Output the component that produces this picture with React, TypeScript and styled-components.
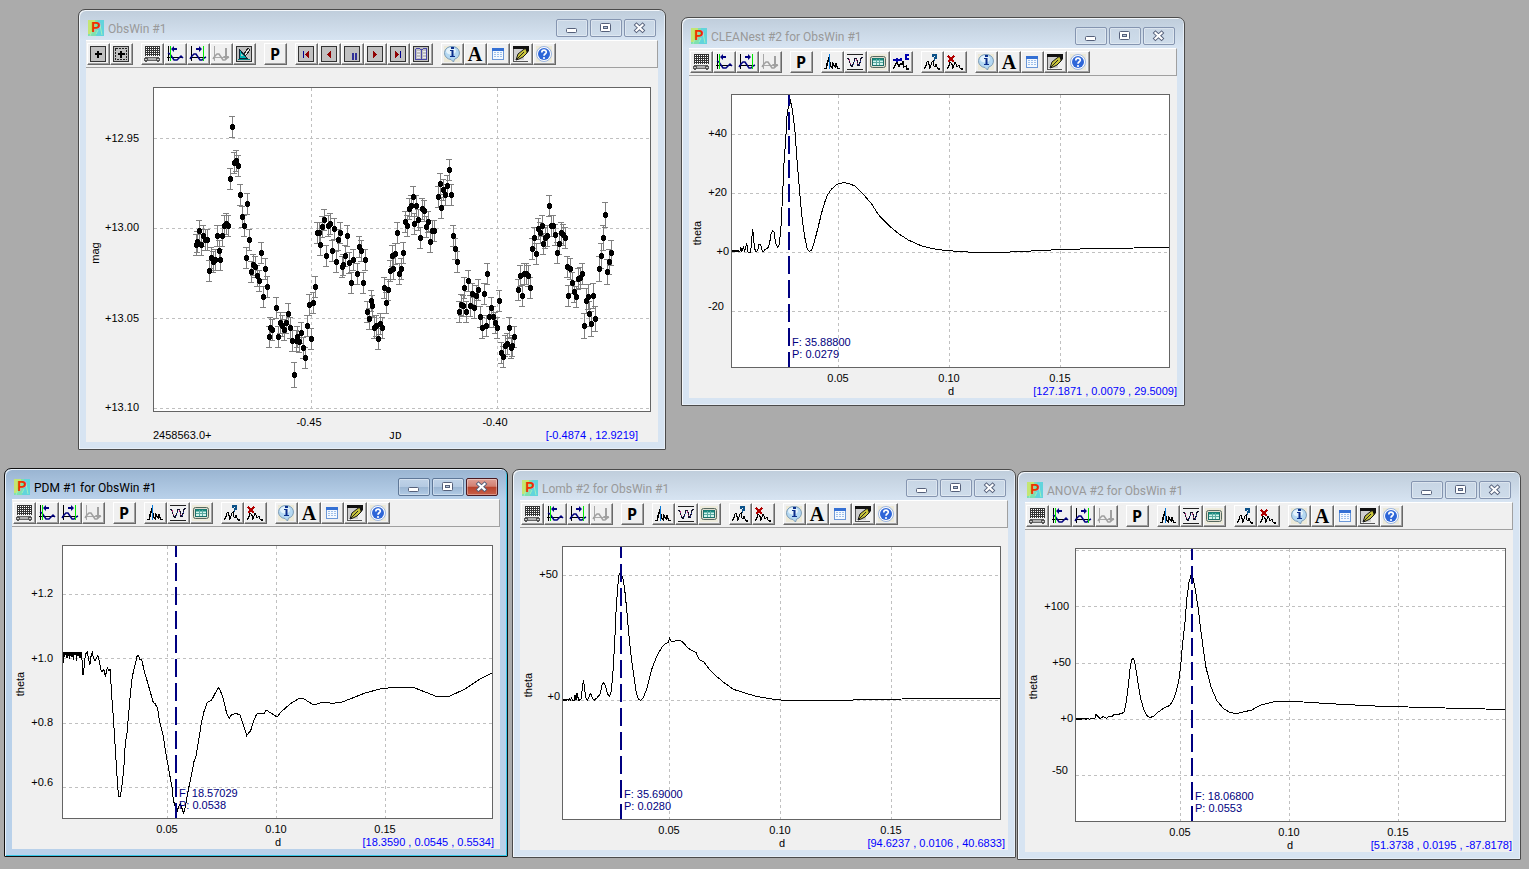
import React from "react";
import styled, { createGlobalStyle, css } from "styled-components";

const GlobalStyle = createGlobalStyle`
  html, body { margin: 0; background: #ababab; }
  *, *::before, *::after { box-sizing: border-box; }
`;

/* ---------- window chrome ---------- */

const Desktop = styled.main`
  position: relative;
  min-height: 100vh;
  overflow: hidden;
  background: #ababab;
  font-family: "Liberation Sans", Arial, sans-serif;
  font-size: 11px;
`;

const Frame = styled.section<{ $x: number; $y: number; $w: number; $h: number; $active?: boolean }>`
  position: absolute;
  left: ${(p) => p.$x}px;
  top: ${(p) => p.$y}px;
  width: ${(p) => p.$w}px;
  height: ${(p) => p.$h}px;
  display: flex;
  flex-direction: column;
  padding: 0 7px 7px;
  border: 1px solid ${(p) => (p.$active ? "#111" : "#4b4b4b")};
  border-radius: 7px 7px 1px 1px;
  ${(p) =>
    p.$active
      ? css`
          background: linear-gradient(#99b4d1 0, #b9d1ea 30px, #b9d1ea 100%);
          box-shadow: inset 1px 1px 0 #e8f1fa, inset -1px -1px 0 #37c8e8;
        `
      : css`
          background: linear-gradient(#bfcddb 0, #d7e4f2 30px, #d7e4f2 100%);
          box-shadow: inset 1px 1px 0 #f3f7fb, inset -1px -1px 0 #e6eef7;
        `}
`;

const TitleBar = styled.header`
  flex: none;
  display: flex;
  align-items: flex-start;
  height: 30px;
  padding: 9px 2px 0;
`;

const Title = styled.h1<{ $active?: boolean }>`
  flex: 1;
  margin: 0 0 0 4px;
  font: 400 12px/20px Roboto, "Open Sans", sans-serif;
  color: ${(p) => (p.$active ? "#000" : "#999")};
  white-space: nowrap;
`;

const AppIcon = styled.svg`
  flex: none;
  width: 16px;
  height: 16px;
  margin-top: 1px;
  overflow: visible;
`;

const Captions = styled.div`
  display: flex;
  gap: 2px;
`;

const Caption = styled.button<{ $tone: "idle" | "blue" | "red" }>`
  display: flex;
  align-items: center;
  justify-content: center;
  width: 32px;
  height: 18px;
  padding: 0;
  border: 1px solid ${(p) => ({ idle: "#8595b0", blue: "#5f7898", red: "#4a1a22" })[p.$tone]};
  border-radius: 2px;
  box-shadow: inset 0 0 0 1px rgba(255, 255, 255, 0.35);
  background: ${(p) =>
    ({
      idle: "linear-gradient(#c8d6e5, #cedcea)",
      blue: "linear-gradient(#c0d3e8 0, #b4cae2 48%, #9ab5d2 50%, #b2cbe5 100%)",
      red: "linear-gradient(#dfa096 0, #d28072 46%, #b8412b 50%, #c8614a 100%)",
    })[p.$tone]};
`;

const Body = styled.div`
  flex: 1;
  display: flex;
  flex-direction: column;
  min-height: 0;
  background: #f0f0f0;
`;

const Toolbar = styled.div`
  flex: none;
  display: flex;
  gap: 8px;
  height: 28px;
  padding: 2px 0 0 1px;
  border-top: 1px solid #fff;
  border-right: 1px solid #a0a0a0;
  border-bottom: 1px solid #a0a0a0;
`;

const Group = styled.div`
  display: flex;
`;

const Tool = styled.button`
  display: flex;
  align-items: flex-start;
  justify-content: flex-start;
  width: 23px;
  height: 22px;
  padding: 2px;
  border: 1px solid;
  border-color: #fff #696969 #696969 #fff;
  box-shadow: inset -1px -1px 0 #a0a0a0;
  background: #f0f0f0;
  svg {
    flex: none;
    display: block;
    width: 16px;
    height: 16px;
    overflow: visible;
  }
`;

const Glyph = styled.span<{ $serif?: boolean }>`
  flex: none;
  width: 16px;
  color: #000;
  text-align: center;
  font: ${(p) =>
    p.$serif
      ? `700 20px/16px "Liberation Serif", serif`
      : `700 16px/16px "Open Sans", "Liberation Sans", sans-serif`};
`;

const Plot = styled.svg`
  flex: 1;
  display: block;
  width: 100%;
  min-height: 0;
  font-family: "Liberation Sans", Arial, sans-serif;
  font-size: 11px;
  .unit {
    font-family: "Liberation Mono", monospace;
  }
`;

/* ---------- toolbar drawings, on a 16 x 16 grid ---------- */

const crisp = { shapeRendering: "crispEdges" as const };

const Box = ({ children }: { children: React.ReactNode }) => (
  <svg viewBox="0 0 16 16" {...crisp}>
    <rect width="16" height="16" fill="#333" />
    <rect x="1" y="1" width="14" height="14" fill="#c0c0c0" />
    {children}
  </svg>
);

const Plus = () => <path d="M5 7h7v2h-7zM7 5h2v7h-2z" fill="#000" />;

const Axes = ({ side }: { side: "left" | "right" | "off" }) => {
  const off = side === "off";
  const ink = off ? "#a8a8a8" : "#000";
  const wave = off ? "#a0a0a0" : "#000080";
  return (
    <svg viewBox="0 0 16 16">
      <rect x="1" y="0" width="1" height="15" fill={ink} />
      <rect x="0" y="11" width="16" height="1" fill={ink} />
      <path
        d={
          side === "left"
            ? "M1 7L3 8L5 11L7 14H10L12 12L14 10L16 12"
            : "M0 13L2 10L4 8H6L8 11L10 14H12L14 12L16 11"
        }
        fill="none"
        stroke={wave}
        strokeWidth="1.500"
      />
      {side === "left" && <path d="M4 3L7 0V2H10V4H7V6Z" fill={wave} />}
      {side === "right" && <path d="M12 3L9 0V2H6V4H9V6Z" fill={wave} />}
      {side === "left" && <rect x="3" y="0" width="1" height="15" fill="#00e800" />}
      {side === "right" && <rect x="13" y="0" width="1" height="15" fill="#00e800" />}
      {off && <path d="M12 2h2v8h2l-3 4l-3-4h2z" fill="#a0a0a0" />}
    </svg>
  );
};

const peaks = "M0 14.500H2L3 12V10L4 7L5 4L6 9L7 13L8 14L9 9L10 12L11 13L12 10L13 13L14 14.500H16";

const icons: Record<string, React.ReactNode> = {
  add: (
    <Box>
      <Plus />
    </Box>
  ),
  addArea: (
    <Box>
      <rect x="2.500" y="2.500" width="11" height="11" fill="none" stroke="#222" strokeDasharray="2 1" />
      <Plus />
    </Box>
  ),
  grid: (
    <svg viewBox="0 0 16 16" {...crisp}>
      <rect x="1" y="0" width="15" height="10" fill="#fff" />
      <path
        d="M1.500 0v10M3.500 0v10M5.500 0v10M7.500 0v10M9.500 0v10M11.500 0v10M13.500 0v10M15.500 0v10M1 .5h15M1 2.500h15M1 4.500h15M1 6.500h15M1 8.500h15"
        stroke="#333"
        fill="none"
      />
      <path d="M1 12h14v2h-14z" fill="#b0b0b0" />
      <path d="M3 11h11v1h-11zM4 14h8v1h-8z" fill="#666" />
      <path d="M0 12h4v3h-4zM12 12h4v3h-4zM1 11h2v5h-2zM13 11h2v5h-2z" fill="#555" />
      <path d="M1 13h2v1h-2zM13 13h2v1h-2z" fill="#ccc" />
    </svg>
  ),
  left: <Axes side="left" />,
  right: <Axes side="right" />,
  axesOff: <Axes side="off" />,
  design: (
    <Box>
      <path d="M3 3V12H11Z" fill="#00b4b4" stroke="#123" />
      <path d="M5 8V10H7Z" fill="#c0c0c0" />
      <path d="M8 8L12 2L14 4L10 9L8 10Z" fill="#e8e8e8" stroke="#222" />
      <path d="M2 13h12v1h-12z" fill="#008080" />
    </Box>
  ),
  first: (
    <Box>
      <path d="M5 5h1v7h-1z" fill="#000090" />
      <path d="M11 5V12L7 8.500Z" fill="#900000" />
    </Box>
  ),
  back: (
    <Box>
      <path d="M10 5V12L6 8.500Z" fill="#900000" />
    </Box>
  ),
  pause: (
    <Box>
      <path d="M8 7h2v7h-2zM11 7h2v7h-2z" fill="#303098" />
    </Box>
  ),
  forward: (
    <Box>
      <path d="M6 5V12L10 8.500Z" fill="#900000" />
    </Box>
  ),
  last: (
    <Box>
      <path d="M5 5V12L9 8.500Z" fill="#900000" />
      <path d="M10 5h1v7h-1z" fill="#000090" />
    </Box>
  ),
  book: (
    <Box>
      <path
        d="M2.500 3V13.500H13.500V3M8.500 3V14M2.500 2.500H6L8.500 4L11 2.500H13.500"
        fill="none"
        stroke="#4848a8"
      />
      <path d="M4 5.500h3M4 8.500h3M4 11.500h3M10 5.500h3M10 8.500h3M10 11.500h3" stroke="#e8e8f4" />
    </Box>
  ),
  spectrum: (
    <svg viewBox="0 0 16 16">
      <path d={peaks} fill="none" stroke="#000" strokeWidth="1.300" {...crisp} />
      <rect x="5" y="0" width="1" height="15" fill="#0878d8" />
    </svg>
  ),
  wave: (
    <svg viewBox="0 0 16 16" {...crisp}>
      <path d="M0 0h16v1h-16zM0 15h16v1h-16z" fill="#222" />
      <path
        d="M0 4.500H1.500L3 9L4 12H5.500L7 8L8 4.500H9.500L11 11H12.500L13.500 6L14.500 3.500H16"
        fill="none"
        stroke="#101028"
        strokeWidth="1.200"
      />
      <path d="M2 5L5 12M9 5L11 10" stroke="#b0307a" strokeDasharray="2 2" />
      <path d="M6 11L8 5M12 11L14 5" stroke="#3040b0" strokeDasharray="1 2" />
    </svg>
  ),
  table: (
    <svg viewBox="0 0 16 16">
      <rect x="-1" y="0" width="18" height="16" fill="#eeebdc" />
      <rect x="0.500" y="2.500" width="15" height="11" rx="2" fill="#e0ded0" stroke="#56685f" />
      <rect x="2.500" y="4.500" width="11" height="7" fill="#d2f4ec" stroke="#1c706a" />
      <path d="M3 5.500h10" stroke="#178c80" strokeWidth="2" />
      <path d="M3 8.500h10M6.500 5v6M9.500 5v6" stroke="#5aaaa0" />
    </svg>
  ),
  clean: (
    <svg viewBox="0 0 16 16" {...crisp}>
      <path d="M0 15L3 10L4 7L5 11L6 13L8 9L9 11L10 8L11 13L13 12L14 15H16" fill="none" stroke="#000" strokeWidth="1.300" />
      <path d="M0 6H9M4 4V8M8 4V7" stroke="#0000a8" strokeWidth="1.500" />
      <path d="M16 1H13V5H16" fill="none" stroke="#0000b0" strokeWidth="2" />
    </svg>
  ),
  ask: (
    <svg viewBox="0 0 16 16" {...crisp}>
      <path d="M0 15L2 12L3 8L4 7L5 10L6 14L8 8L9 7L10 12L11 13L12 10L13 13L14 15H16" fill="none" stroke="#000" strokeWidth="1.200" />
      <path d="M9 3V1H12V4H10.500V7" fill="none" stroke="#0a5088" strokeWidth="1.800" />
    </svg>
  ),
  drop: (
    <svg viewBox="0 0 16 16" {...crisp}>
      <path d="M0 15L2 12L3 8L5 10L6 14L8 8L9 10L10 13L11 12L12 11L13 14L14 15H16" fill="none" stroke="#000" strokeWidth="1.200" />
      <path d="M1 2L7 8M7 2L1 8" stroke="#b00000" strokeWidth="1.800" />
    </svg>
  ),
  info: (
    <svg viewBox="0 0 16 16">
      <rect x="0" y="0" width="16" height="16" fill="#ece9d8" />
      <path d="M8 .5a7 6.500 0 0 1 2.500 12.700L9.500 16L7 13.500A7 6.500 0 0 1 8 .5Z" fill="#b4d8f2" stroke="#7c9cb8" />
      <ellipse cx="7" cy="5" rx="5" ry="3.500" fill="#e4f3fc" />
      <path d="M7 1h3v2h-3zM6 4h3.500v6h1.500v1h-5v-1h1.500v-5h-1.500z" fill="#0c2f8c" />
    </svg>
  ),
  list: (
    <svg viewBox="0 0 16 16" {...crisp}>
      <rect x="2.500" y="2.500" width="11" height="11" fill="#f4f9ff" stroke="#6c98d8" />
      <path d="M2 2h12v3h-12z" fill="#3470d4" />
      <path d="M4 6.500h9M4 8.500h9M4 10.500h9" stroke="#9fc0ea" strokeDasharray="2 1" />
    </svg>
  ),
  pen: (
    <svg viewBox="0 0 16 16">
      <path d="M0 0h16v3h-16z" fill="#111" />
      <path d="M0 3h1v12h14v1h-15z" fill="#555" />
      <path d="M1 3h10v11h-10z" fill="#cfcfcf" />
      <path d="M3 14L5 8L10 4L13 2H15.500L14 7L10 11L6 13Z" fill="#c8c43c" stroke="#161616" />
      <path d="M3 14L11 6" stroke="#222" />
      <path d="M12 2h4v3l-2 2z" fill="#111" />
    </svg>
  ),
  help: (
    <svg viewBox="0 0 16 16">
      <rect x="0" y="0" width="16" height="16" fill="#ece9d8" />
      <circle cx="8" cy="8" r="7.500" fill="#fff" stroke="#9ab4e0" />
      <circle cx="8" cy="8" r="6" fill="#2e66d8" />
      <path d="M5.800 6.500C5.800 3.400 10.400 3.600 10.300 6.200C10.200 7.800 8 7.800 8 9.800" fill="none" stroke="#fff" strokeWidth="1.700" />
      <circle cx="8" cy="12" r="1.100" fill="#fff" />
    </svg>
  ),
  period: <Glyph>P</Glyph>,
  font: <Glyph $serif>A</Glyph>,
};

const names: Record<string, string> = {
  add: "Add", addArea: "Add area", grid: "Data sheet", left: "Left limit", right: "Right limit",
  axesOff: "Reset limits", design: "Edit", first: "First", back: "Previous", pause: "Pause",
  forward: "Next", last: "Last", book: "Log", spectrum: "Cursor", wave: "Phase plot",
  table: "Table", clean: "Clean", ask: "Find peak", drop: "Remove peak", info: "Info",
  list: "List", pen: "Colors", help: "Help", period: "Period", font: "Font",
};

const common = ["info", "font", "list", "pen", "help"];
const limits = ["grid", "left", "right", "axesOff"];
const obsTools = [
  ["add", "addArea"],
  [...limits, "design"],
  ["period"],
  ["first", "back", "pause", "forward", "last", "book"],
  common,
];
const periodTools = [limits, ["period"], ["spectrum", "wave", "table"], ["ask", "drop"], common];
const cleanTools = [limits, ["period"], ["spectrum", "wave", "table", "clean"], ["ask", "drop"], common];

/* ---------- plots ---------- */

/* Sizes and positions are in plot pixels, measured from the plot's top left corner. */
interface Chart {
  view: [number, number, number, number];
  size: [number, number];
  vLines: number[];
  hLines: number[];
  xTicks: [number, string][];
  yTicks: [number, number, string][];
  yName: [number, number, string];
  unit: [number, string];
  range?: string;
  readout: [number, string];
  curve?: string;
  points?: [number, number][];
  marker?: { x: number; f: string; p: string };
}

const observations: [number, number][] = [
  [43,158],[44,155],[46,144],[48,158],[50,149],[52,153],[54,153],[56,184],[58,171],[60,175],[62,173],[64,149],
  [66,164],[67,173],[69,149],[71,139],[73,137],[75,139],[77,92],[79,40],[81,76],[83,74],[85,79],[87,108],
  [89,130],[91,139],[93,171],[94,117],[96,153],[98,185],[100,178],[102,180],[104,189],[106,194],[108,166],
  [110,210],[112,182],[114,200],[116,250],[117,241],[119,243],[123,221],[125,250],[127,236],[129,239],
  [131,243],[133,236],[135,227],[137,241],[139,254],[141,288],[143,254],[144,250],[146,255],[148,246],
  [150,261],[152,271],[154,239],[156,218],[158,252],[160,216],[162,200],[164,146],[166,146],[167,158],
  [169,140],[171,133],[173,169],[175,139],[177,137],[179,164],[181,142],[183,175],[185,153],[187,146],
  [189,180],[190,178],[192,169],[194,149],[196,176],[198,196],[200,173],[204,187],[206,160],[208,164],
  [210,196],[212,173],[214,225],[216,232],[218,214],[219,219],[221,241],[223,239],[225,252],[227,237],
  [229,241],[231,201],[233,216],[235,203],[237,184],[239,169],[240,182],[242,167],[244,146],[246,187],
  [248,182],[250,166],[252,135],[254,139],[256,122],[258,119],[260,110],[261,137],[263,119],[265,133],
  [267,151],[269,122],[271,124],[273,140],[275,135],[277,155],[279,144],[281,144],[285,110],[287,97],
  [288,121],[290,103],[292,108],[294,99],[296,83],[298,108],[300,149],[302,162],[304,175],[306,225],
  [308,218],[310,219],[311,201],[313,225],[315,194],[317,219],[319,207],[321,221],[323,209],[325,203],
  [327,230],[329,241],[331,207],[333,239],[334,187],[336,230],[338,221],[340,230],[342,236],[344,241],
  [346,214],[348,266],[350,270],[352,259],[354,257],[356,241],[358,261],[359,259],[361,250],[365,203],
  [367,189],[369,209],[371,187],[373,187],[375,189],[377,201],[379,162],[381,151],[383,167],[385,142],
  [387,146],[389,139],[390,157],[392,151],[394,149],[396,119],[398,139],[400,139],[402,148],[404,166],
  [406,157],[408,146],[410,148],[412,151],[414,180],[415,209],[417,182],[419,196],[421,205],[423,210],
  [425,192],[427,191],[429,187],[431,239],[433,214],[435,210],[436,227],[438,237],[440,209],[442,232],
  [446,182],[448,169],[450,151],[452,128],[454,185],[456,175],[458,166],
];

const cleanCurve =
  "1,156 2,158 3,156.5 4,158 5,156.5 6,158 7,156.5 8,158 9,157 10,153.5 10.7,158 12.7,152.5 13.3,158 14.7,154 15.7,149 17,158 19.7,158 20.7,145 21.7,135.5 22.7,143 23.3,154 25,157.5 26.7,156.5 28,150.5 29.7,150.5 31,156 32,158 34,155.5 37.3,153.5 38.7,148.5 40.3,138.5 41.7,137 43,138 44.7,149 46.7,153.5 48.3,150 50,132.5 51.7,99 53,69.5 54.7,46 56,22.5 57.7,9.5 59.3,6.5 60.7,12.5 62.3,22.5 64,37.5 65.7,62.5 67.7,86 69.7,109.5 71.3,126 74,144.5 76.3,155.5 78.3,157.5 80.7,156 84,145.5 87.3,132.5 90.7,118.5 94,107.5 96.7,100.5 100.7,95 105.7,90.5 112.3,88.5 118,89.5 124,92 130.7,98.5 140.7,110 147.3,120.5 157.3,131 167.3,139.5 177.3,146 190.7,152 200.7,154.5 214,156.5 230,157.5 244,158.5 268,158.5 290,157.5 330,155.5 369,154.5 438,153.5";

const pdmCurve =
  "1,118 1,107 2,107 2,112 3,107 3,110 4,107 5,113 5,107 6,111 7,107 7,114 8,107 9,111 9,107 10,112 11,107 11,115 12,107 13,110 14,107 14,116 15,107 16,111 17,107 18,113 18,107 19.7,107 20.3,121.5 21,129.5 21.7,126.5 22.7,115 24,108.5 25.3,107 26.7,115 28,119.5 29,111.5 30.3,107.5 31.7,113.5 33,115.5 34.3,113.5 35.7,110.5 37.3,115.5 38.7,124.5 40,126.5 42,124.5 43.3,131.5 45.3,123 47,125.5 48.3,124.5 49,138.5 50,155 51.3,171.5 53,198.5 54.7,226.5 56,245 57,251.5 58.3,251.5 60,240 61.7,225 63.3,198.5 65,188.5 66.7,168.5 68.3,150 70.3,131.5 72.7,121.5 75,111.5 76.3,110.5 78,115 79.7,114.5 82,125 86.3,140 91.3,157.5 93,158.5 95.7,163.5 97.3,175 101.3,191.5 103.3,205 105.7,218.5 108,231.5 110,241.5 111.3,255 113.7,263.5 115,266.5 116.7,261.5 118.3,258.5 120,263.5 121.7,268.5 123.7,260 126.3,245 128.7,233.5 132,216.5 134,211.5 136.7,195 139.3,178.5 142,166.5 145.3,157.5 149.7,155 153,148.5 156.7,142.5 159,147.5 161.3,153.5 164.7,168.5 167.3,173.5 169.3,170 173.3,168.5 177.7,169.5 181.3,180 184.7,190.5 188.7,185.5 192,175 194.7,169 198,168 202,168.5 204,165 209,168 215,172 219,167 228,159 236,154 241,153 245,156 252,160 258,158 264,157 270,158.5 280,157 288,154 303,148 318,144 330,142.500 343,142 353,143 363,147 376,152 388,151 403,144 418,134 430,128";

const lombCurve =
  "1,153 2,154.5 3,153 4,154.5 5,153 6.3,154.5 7.500,153 8.7,154.5 9.7,151 10.3,154 12.3,154 13,149.3 14,154 15,147.3 16.7,154.3 19,153.5 20.3,143.3 21.3,134.3 22.3,140 23.7,151 25.3,154.5 27.3,150 28.7,147.3 30.3,152.3 32,154.3 35.3,151.5 38,148.3 40,139.3 41.7,136.3 43.3,139.3 45.3,147.3 47.3,150.5 49,146.5 50.7,130 52.7,96.5 54,66.5 55.3,46.5 56.7,30 58.3,26 60.7,31.5 62.7,43.3 64.7,63.3 66.7,86.5 68.7,106.5 71.3,126.5 74,145 76.3,153.3 78.7,154.3 81.3,151.5 84.7,143.3 89.7,123.3 94.7,110.5 99.7,101.5 102.3,98.5 106,96.5 107.7,92 109.3,95.3 112.7,95 117,94 121.3,96.5 125.3,101.5 129.7,104.3 134,106.5 137,113.3 142,116 148,124 154.7,130.5 161.3,136 171.3,143.3 181.3,146.5 194.7,150.5 211.3,153.3 225,154.5 262,154.5 320,153.5 360,152.5 438,152.5";

const anovaCurve =
  "1,170 2,171.5 3,170 4,171.500 5,170 6,171.5 7,170 8,171 10,170 11,171.5 12,170 14,171 15,171 17,170 18,171 20,170 21,166.3 22.3,168 25,170.5 28.3,168.5 31.7,170.5 34,168 36.7,169 39.3,166.3 43.3,166.3 47.3,165.3 49.3,163.5 51.7,151 53.7,134.5 55.3,118 57.3,110.5 58.7,110.3 60.7,119.5 63,134.5 65.7,151 69.3,163 72.3,168 75.3,169.5 79,168 83.3,164 88.3,160.5 95,157.3 99,150.3 101.7,141.3 104,131.3 106,114.5 107.7,94.5 110,74.5 111.7,51.3 114,34.5 116,27.3 117.7,28.5 120.3,41.3 123.3,61.3 125.7,81.3 128.3,101.3 131,119.5 136,139 141.7,152.3 148.3,160.5 155,164.5 161.7,165.5 168.3,164 176.7,162 185,157.3 200,153.5 221.7,153.5 235,154.5 270,156.5 300,158 350,159.5 390,160.5 430,161.5";

const charts: Record<string, Chart> = {
  obs: {
    view: [-67, -19, 572, 374],
    size: [497, 324],
    vLines: [158, 344],
    hLines: [51, 141, 231, 321],
    xTicks: [[156, "-0.45"], [342, "-0.40"]],
    yTicks: [[-14, 51, "+12.95"], [-14, 140, "+13.00"], [-14, 231, "+13.05"], [-14, 320, "+13.10"]],
    yName: [-58, 166, "mag"],
    unit: [242, "JD"],
    range: "2458563.0+",
    readout: [485, "[-0.4874 , 12.9219]"],
    points: observations,
  },
  clean: {
    view: [-42, -18, 488, 322],
    size: [438, 273],
    vLines: [107, 218, 329],
    hLines: [40, 99, 158, 217],
    xTicks: [[107, "0.05"], [218, "0.10"], [329, "0.15"]],
    yTicks: [[-4, 39, "+40"], [-4, 98, "+20"], [-2, 157, "+0"], [-7, 212, "-20"]],
    yName: [-34, 139, "theta"],
    unit: [220, "d"],
    readout: [446, "[127.1871 , 0.0079 , 29.5009]"],
    curve: cleanCurve,
    marker: { x: 58, f: "F: 35.88800", p: "P: 0.0279" },
  },
  pdm: {
    view: [-50, -18, 488, 322],
    size: [430, 273],
    vLines: [105, 214, 323],
    hLines: [49, 113, 178, 242],
    xTicks: [[105, "0.05"], [214, "0.10"], [323, "0.15"]],
    yTicks: [[-9, 48, "+1.2"], [-9, 113, "+1.0"], [-9, 177, "+0.8"], [-9, 237, "+0.6"]],
    yName: [-42, 139, "theta"],
    unit: [216, "d"],
    readout: [432, "[18.3590 , 0.0545 , 0.5534]"],
    curve: pdmCurve,
    marker: { x: 114, f: "F: 18.57029", p: "P: 0.0538" },
  },
  lomb: {
    view: [-42, -18, 488, 322],
    size: [438, 273],
    vLines: [107, 218, 329],
    hLines: [29, 154],
    xTicks: [[107, "0.05"], [218, "0.10"], [329, "0.15"]],
    yTicks: [[-4, 28, "+50"], [-2, 150, "+0"]],
    yName: [-34, 139, "theta"],
    unit: [220, "d"],
    readout: [443, "[94.6237 , 0.0106 , 40.6833]"],
    curve: lombCurve,
    marker: { x: 59, f: "F: 35.69000", p: "P: 0.0280" },
  },
  anova: {
    view: [-50, -18, 488, 322],
    size: [430, 273],
    vLines: [105, 214, 323],
    hLines: [2, 58, 115, 171, 227],
    xTicks: [[105, "0.05"], [214, "0.10"], [323, "0.15"]],
    yTicks: [[-6, 58, "+100"], [-4, 114, "+50"], [-2, 170, "+0"], [-7, 222, "-50"]],
    yName: [-42, 139, "theta"],
    unit: [215, "d"],
    readout: [437, "[51.3738 , 0.0195 , -87.8178]"],
    curve: anovaCurve,
    marker: { x: 117, f: "F: 18.06800", p: "P: 0.0553" },
  },
};

const ErrorPoint = ({ x, y }: { x: number; y: number }) => {
  const e = x > 430 || x === 141 ? 12 : 10;
  return <path d={`M${x - 3} ${y - e - 0.5}h6M${x - 3} ${y + e + 0.5}h6M${x + 0.5} ${y - e}v${2 * e}`} />;
};

const ChartView = ({ chart, label }: { chart: Chart; label: string }) => {
  const [w, h] = chart.size;
  const { marker } = chart;
  return (
    <Plot viewBox={chart.view.join(" ")} role="img" aria-label={label}>
      <g {...crisp} fill="none">
        <rect x="0.500" y="0.500" width={w} height={h} fill="#fff" />
        <g stroke="#c0c0c0" strokeDasharray="3 3">
          {chart.vLines.map((x) => <path key={x} d={`M${x + 0.5} 1V${h}`} />)}
          {chart.hLines.map((y) => <path key={y} d={`M1 ${y + 0.5}H${w}`} />)}
        </g>
        {chart.curve && <polyline points={chart.curve} stroke="#000" />}
        {chart.points && (
          <>
            <g stroke="#808080">
              {chart.points.map(([x, y], i) => <ErrorPoint key={i} x={x} y={y} />)}
            </g>
            <g fill="#000">
              {chart.points.map(([x, y], i) => (
                <path key={i} d={`M${x - 1} ${y - 3}h3v1h1v4h-1v1h-3v-1h-1v-4h1z`} />
              ))}
            </g>
          </>
        )}
        {marker && (
          <path d={`M${marker.x} 0V${h}`} stroke="#000080" strokeWidth="2" strokeDasharray="18 6" strokeDashoffset="6" />
        )}
        <rect x="0.500" y="0.500" width={w} height={h} stroke="#646464" />
      </g>
      {marker && (
        <g fill="#000080">
          <text x={marker.x + 3} y="252">{marker.f}</text>
          <text x={marker.x + 3} y="264">{marker.p}</text>
        </g>
      )}
      <g textAnchor="middle">
        {chart.xTicks.map(([x, t]) => <text key={t} x={x} y={h + 15}>{t}</text>)}
        <text className="unit" x={chart.unit[0]} y={h + 28}>{chart.unit[1]}</text>
        <text transform={`translate(${chart.yName[0] + 4} ${chart.yName[1]}) rotate(-90)`}>{chart.yName[2]}</text>
      </g>
      {chart.range && <text x="0" y={h + 28}>{chart.range}</text>}
      <g textAnchor="end">
        {chart.yTicks.map(([x, y, t]) => <text key={t} x={x} y={y + 4}>{t}</text>)}
        <text x={chart.readout[0]} y={h + 28} fill="#0000ff">{chart.readout[1]}</text>
      </g>
    </Plot>
  );
};

/* ---------- windows ---------- */

const CaptionIcon = ({ kind }: { kind: "min" | "max" | "close" }) => (
  <svg width="14" height="12" viewBox="0 0 14 12">
    {kind === "min" && <rect x="1.500" y="6.500" width="10" height="4" rx="1" fill="#fff" stroke="#55607a" />}
    {kind === "max" && (
      <>
        <rect x="1.500" y="1.500" width="10" height="8" rx="1" fill="#fff" stroke="#55607a" />
        <rect x="4.500" y="4.500" width="4" height="2" fill="#b8c6d8" stroke="#55607a" />
      </>
    )}
    {kind === "close" && (
      <>
        <path d="M3.500 3L9.500 8.500M9.500 3L3.500 8.500" stroke="#55607a" strokeWidth="4" strokeLinecap="square" />
        <path d="M3.500 3L9.500 8.500M9.500 3L3.500 8.500" stroke="#fff" strokeWidth="2.200" strokeLinecap="square" />
      </>
    )}
  </svg>
);

const Logo = () => (
  <AppIcon viewBox="0 0 16 16" aria-hidden="true">
    <rect width="16" height="16" fill="#7fe0b0" />
    <path d="M0 0h7v9l-4 5h-3z" fill="#c4e672" />
    <path d="M10 0h6v16h-8z" fill="#62d4dc" />
    <path d="M2 16L5 8M12 5L14 15M8 14L10 10" stroke="#9cf0c0" />
    <text x="8" y="12" textAnchor="middle" fontFamily="Liberation Sans, sans-serif" fontWeight="700" fontSize="14" fill="#f03000">P</text>
  </AppIcon>
);

interface WindowProps {
  title: string;
  box: [number, number, number, number];
  tools: string[][];
  chart: Chart;
  active?: boolean;
}

const ChildWindow = ({ title, box, tools, chart, active }: WindowProps) => (
  <Frame $x={box[0]} $y={box[1]} $w={box[2]} $h={box[3]} $active={active}>
    <TitleBar>
      <Logo />
      <Title $active={active}>{title}</Title>
      <Captions>
        <Caption type="button" aria-label="Minimize" $tone={active ? "blue" : "idle"}><CaptionIcon kind="min" /></Caption>
        <Caption type="button" aria-label="Maximize" $tone={active ? "blue" : "idle"}><CaptionIcon kind="max" /></Caption>
        <Caption type="button" aria-label="Close" $tone={active ? "red" : "idle"}><CaptionIcon kind="close" /></Caption>
      </Captions>
    </TitleBar>
    <Body>
      <Toolbar role="toolbar" aria-label={`${title} tools`}>
        {tools.map((group, i) => (
          <Group key={i}>
            {group.map((id) => (
              <Tool key={id} type="button" aria-label={names[id]} disabled={id === "axesOff"}>{icons[id]}</Tool>
            ))}
          </Group>
        ))}
      </Toolbar>
      <ChartView chart={chart} label={`${title} plot`} />
    </Body>
  </Frame>
);

export default function App() {
  return (
    <>
      <GlobalStyle />
      <Desktop>
        <ChildWindow title="ObsWin #1" box={[78, 9, 588, 441]} tools={obsTools} chart={charts.obs} />
        <ChildWindow title="CLEANest #2 for ObsWin #1" box={[681, 17, 504, 389]} tools={cleanTools} chart={charts.clean} />
        <ChildWindow title="Lomb #2 for ObsWin #1" box={[512, 469, 504, 389]} tools={periodTools} chart={charts.lomb} />
        <ChildWindow title="ANOVA #2 for ObsWin #1" box={[1017, 471, 504, 389]} tools={periodTools} chart={charts.anova} />
        <ChildWindow title="PDM #1 for ObsWin #1" box={[4, 468, 504, 389]} tools={periodTools} chart={charts.pdm} active />
      </Desktop>
    </>
  );
}
